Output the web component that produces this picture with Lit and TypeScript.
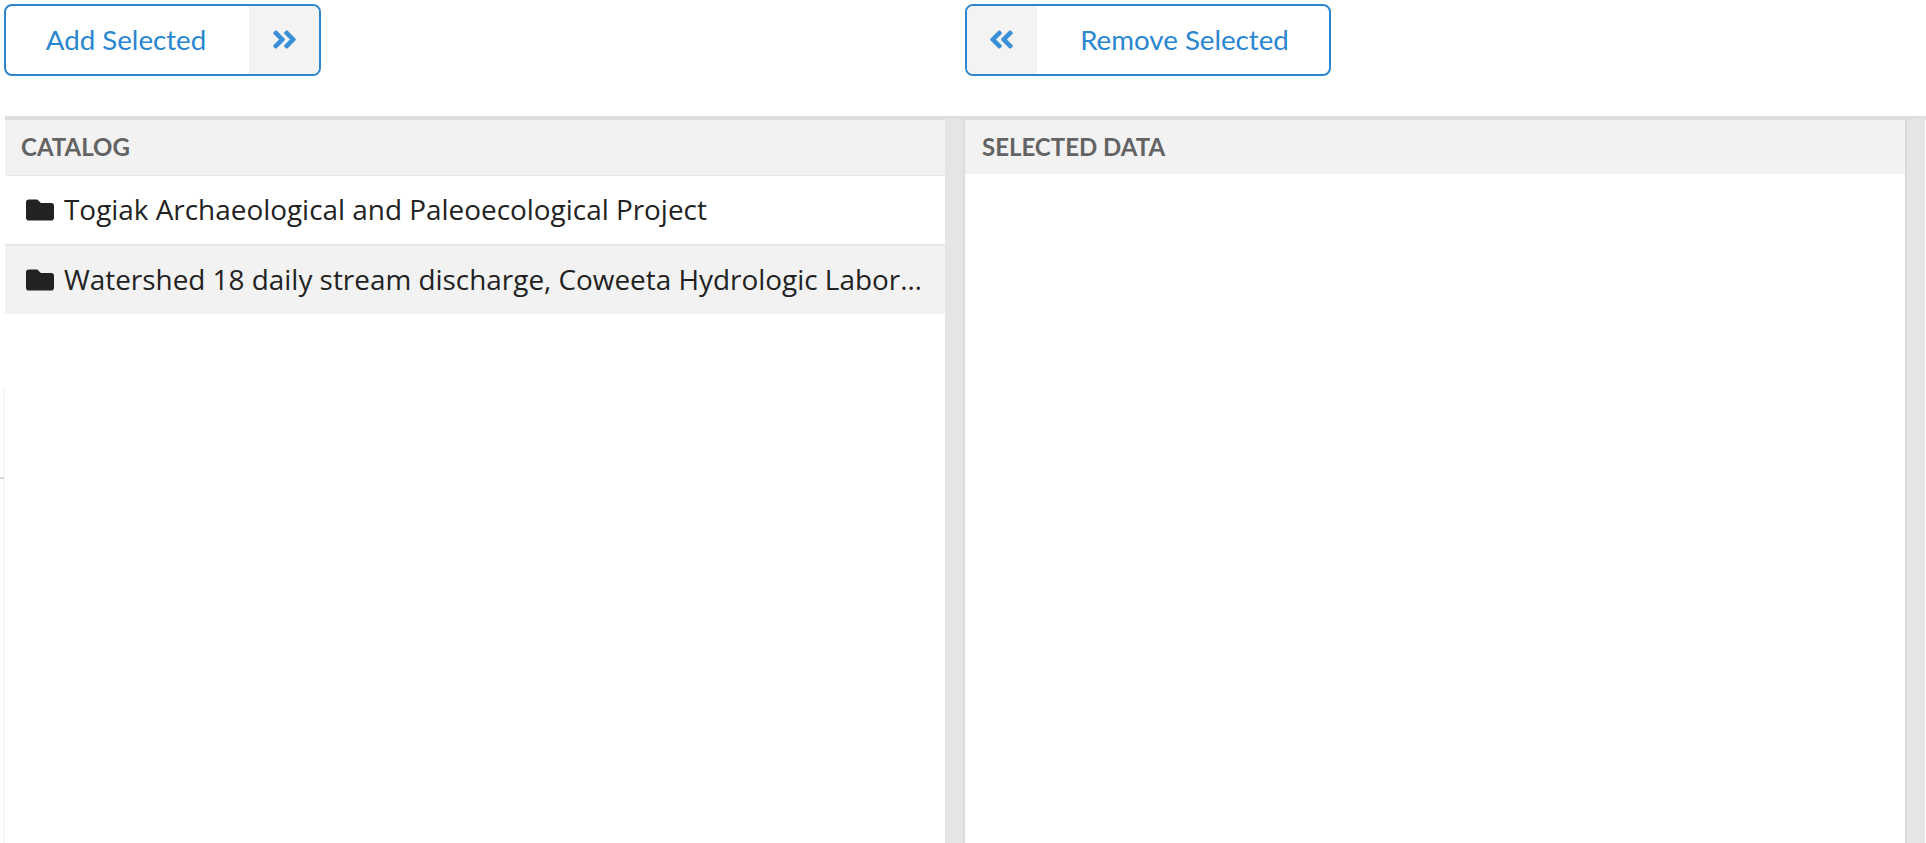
import { LitElement, html, css, svg } from "lit";
import { customElement } from "lit/decorators.js";

const RIGHT = svg`<path d="M224.3 273l-136 136c-9.4 9.4-24.6 9.4-33.9 0l-22.6-22.6c-9.4-9.4-9.4-24.6 0-33.9l96.4-96.4-96.4-96.4c-9.4-9.4-9.4-24.6 0-33.9L54.3 103c9.4-9.4 24.6-9.4 33.9 0l136 136c9.5 9.4 9.5 24.6.1 34zm192-34l-136-136c-9.4-9.4-24.6-9.4-33.9 0l-22.6 22.6c-9.4 9.4-9.4 24.6 0 33.9l96.4 96.4-96.4 96.4c-9.4 9.4-9.4 24.6 0 33.9l22.6 22.6c9.4 9.4 24.6 9.4 33.9 0l136-136c9.4-9.2 9.4-24.4 0-33.8z"/>`;
const FOLDER = svg`<path d="M464 128H272l-64-64H48C21.49 64 0 85.49 0 112v288c0 26.51 21.49 48 48 48h416c26.51 0 48-21.49 48-48V176c0-26.51-21.49-48-48-48z"/>`;

@customElement("app-root")
export class AppRoot extends LitElement {
  static styles = css`
    :host { display: block; width: 1926px; height: 843px; overflow: hidden; background: #fff; position: relative; font-family: "Lato", sans-serif; }
    .toolbar { display: grid; grid-template-columns: 961px 1fr; height: 116px; padding: 4px 0 0 4px; box-sizing: border-box; }
    .btn { display: inline-flex; height: 72px; box-sizing: border-box; border: 2px solid #2a86cf; border-radius: 8px; overflow: hidden; color: #2a86cf; font-size: 27.7px; background: #fff; align-items: stretch; }
    .btn.add { width: 317px; }
    .btn.remove { width: 366px; }
    .label { flex: 1; display: flex; align-items: center; justify-content: center; padding-bottom: 1px; }
    .add .label { padding-right: 3px; }
    .remove .label { padding-left: 3px; }
    .ic { width: 70px; background: #f3f3f3; display: flex; align-items: center; justify-content: center; }
    .ic svg { width: 29px; height: 29px; fill: #3b8fd6; display: block; margin-top: -1px; }
    .ic .flip { transform: scaleX(-1); margin-left: -2px; }
    .panels { border-top: 4px solid #dedede; margin-left: 5px; display: grid; grid-template-columns: 960px 960px; height: 727px; }
    .col { display: grid; grid-template-columns: 940px 20px; height: 100%; }
    .gutter { background: #e5e5e5; margin-top: -1px; }
    .gutter.first { box-shadow: inset -2px 0 0 #dcdcdc; }
    .gutter.second { box-shadow: inset 2px 0 0 #d9d9d9; }
    .head { height: 55px; box-sizing: border-box; background: #f2f2f2; display: flex; align-items: center; padding: 0 0 2px 16px; font-size: 24px; font-weight: 700; color: #636363; text-transform: uppercase; }
    .head.left { border-bottom: 1px solid #e8e8e8; height: 56px; }
    .head.right { height: 54px; padding-left: 17px; }
    .row { height: 68px; display: flex; align-items: center; gap: 10px; padding-left: 21px; padding-right: 16px; font-family: "Open Sans", sans-serif; font-size: 27.9px; color: #222; border-bottom: 2px solid #e4e4e4; box-sizing: content-box; }
    .row.alt { background: #f2f2f2; border-bottom: 0; }
    .row svg { width: 28px; height: 28px; fill: #222; flex: none; }
    .row span { overflow: hidden; white-space: nowrap; text-overflow: ellipsis; margin-bottom: 2px; }
    .edge { position: absolute; left: 3px; top: 388px; width: 2px; height: 455px; background: #f6f6f6; }
    .tick { position: absolute; left: 0; top: 477px; width: 4px; height: 2px; background: #d4d4d4; }
  `;
  render() {
    return html`
      <div class="toolbar">
        <div><div class="btn add"><div class="label">Add Selected</div><div class="ic"><svg viewBox="0 0 448 512">${RIGHT}</svg></div></div></div>
        <div><div class="btn remove"><div class="ic"><svg class="flip" viewBox="0 0 448 512">${RIGHT}</svg></div><div class="label">Remove Selected</div></div></div>
      </div>
      <div class="panels">
        <div class="col">
          <div>
            <div class="head left">Catalog</div>
            <div class="row"><svg viewBox="0 0 512 512">${FOLDER}</svg><span>Togiak Archaeological and Paleoecological Project</span></div>
            <div class="row alt"><svg viewBox="0 0 512 512">${FOLDER}</svg><span>Watershed 18 daily stream discharge, Coweeta Hydrologic Laboratory, North Carolina</span></div>
          </div>
          <div class="gutter first"></div>
        </div>
        <div class="col">
          <div><div class="head right">Selected Data</div></div>
          <div class="gutter second"></div>
        </div>
      </div>
      <div class="edge"></div><div class="tick"></div>
    `;
  }
}
